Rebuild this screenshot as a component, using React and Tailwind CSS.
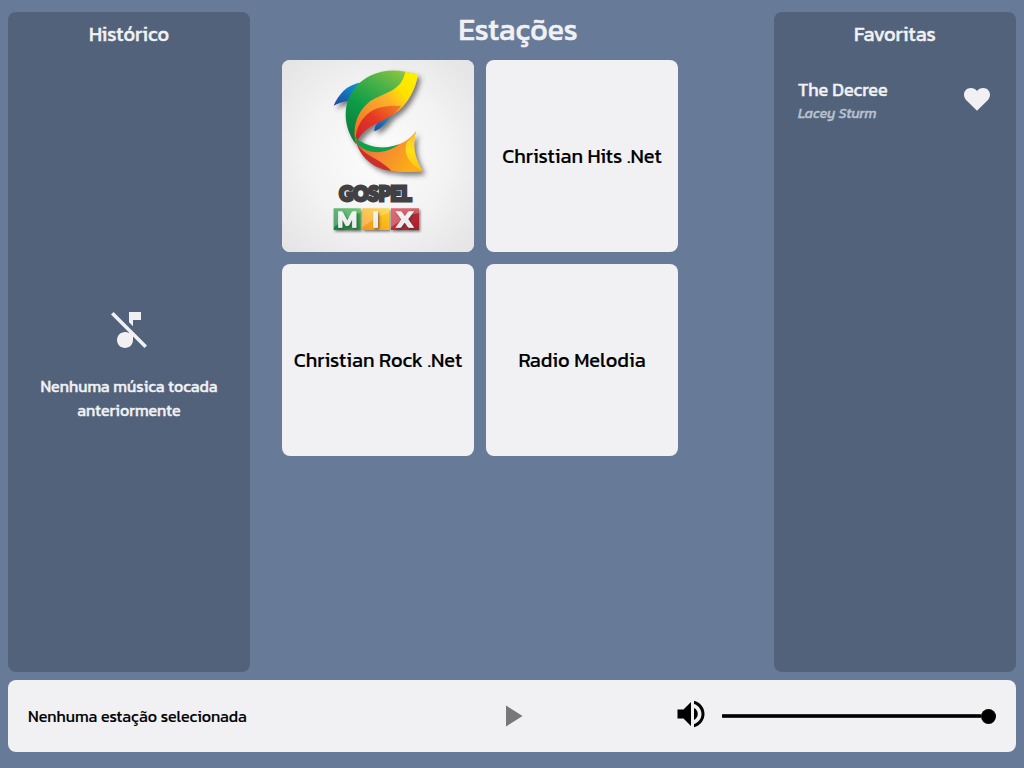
import React from "react";
import { MdMusicOff, MdVolumeUp, MdPlayArrow } from "react-icons/md";

function GospelMixLogo() {
  return (
    <svg viewBox="0 0 576 576" className="block h-full w-full">
      <defs>
        <radialGradient id="bg" cx="50%" cy="50%" r="72%">
          <stop offset="0" stopColor="#fcfcfd" />
          <stop offset="0.5" stopColor="#f3f3f4" />
          <stop offset="0.8" stopColor="#e9e9ea" />
          <stop offset="1" stopColor="#e3e3e4" />
        </radialGradient>
        <linearGradient id="green" x1="0.8" y1="0" x2="0.2" y2="1">
          <stop offset="0" stopColor="#8ec63f" />
          <stop offset="0.3" stopColor="#45b049" />
          <stop offset="0.6" stopColor="#0f9d46" />
          <stop offset="1" stopColor="#087a3c" />
        </linearGradient>
        <linearGradient id="yellow" x1="1" y1="0" x2="0.1" y2="1">
          <stop offset="0" stopColor="#fff200" />
          <stop offset="0.28" stopColor="#ffe100" />
          <stop offset="0.46" stopColor="#fbb02d" />
          <stop offset="1" stopColor="#f26a24" />
        </linearGradient>
        <linearGradient id="red" x1="1" y1="0" x2="0" y2="1">
          <stop offset="0" stopColor="#f58220" />
          <stop offset="0.45" stopColor="#e63a24" />
          <stop offset="1" stopColor="#c91f2d" />
        </linearGradient>
        <linearGradient id="blue" x1="1" y1="0" x2="0" y2="1">
          <stop offset="0" stopColor="#0b9ed9" />
          <stop offset="1" stopColor="#20469b" />
        </linearGradient>
        <linearGradient id="tail" x1="0" y1="0" x2="1" y2="0.4">
          <stop offset="0" stopColor="#ef5a28" />
          <stop offset="0.5" stopColor="#f58634" />
          <stop offset="1" stopColor="#fbac18" />
        </linearGradient>
        <linearGradient id="tailTip" x1="0" y1="0" x2="0" y2="1">
          <stop offset="0" stopColor="#fbc02a" />
          <stop offset="0.5" stopColor="#ffe01a" />
          <stop offset="1" stopColor="#fdc010" />
        </linearGradient>
        <linearGradient id="tileG" x1="0" y1="1" x2="1" y2="0">
          <stop offset="0" stopColor="#12823f" />
          <stop offset="1" stopColor="#43b649" />
        </linearGradient>
        <linearGradient id="tileY" x1="0" y1="1" x2="1" y2="0">
          <stop offset="0" stopColor="#f5921f" />
          <stop offset="1" stopColor="#ffd21e" />
        </linearGradient>
        <linearGradient id="tileR" x1="0" y1="0" x2="1" y2="1">
          <stop offset="0" stopColor="#dc3a45" />
          <stop offset="1" stopColor="#a31e2a" />
        </linearGradient>
        <linearGradient id="silver" x1="0" y1="0" x2="0" y2="1">
          <stop offset="0" stopColor="#ffffff" />
          <stop offset="1" stopColor="#dcdddf" />
        </linearGradient>
        <filter id="shadow" x="-20%" y="-20%" width="150%" height="150%">
          <feDropShadow dx="9" dy="10" stdDeviation="8" floodColor="#444" floodOpacity="0.7" />
        </filter>
        <filter id="small" x="-20%" y="-20%" width="150%" height="150%">
          <feDropShadow dx="4" dy="5" stdDeviation="3" floodColor="#333" floodOpacity="0.6" />
        </filter>
      </defs>
      <rect width="576" height="576" fill="url(#bg)" />
      <g filter="url(#shadow)">
        <path d="M155 137C170 105 192 74 240 67L202 124C186 124 168 130 155 137Z" fill="url(#blue)" />
        <path d="M276 214C278 202 282 192 290 186L330 164C316 184 300 206 276 214Z" fill="url(#blue)" />
        <path d="M222 252C184 205 180 133 216 88C252 42 305 24 370 35L406 43C402 78 379 122 345 153C300 185 244 186 222 252Z" fill="url(#green)" />
        <path d="M370 35L407 43C404 82 374 140 338 160C300 181 232 196 222 252C211 205 222 158 264 124C306 96 358 96 370 35Z" fill="url(#yellow)" />
        <path d="M357 138C322 136 282 138 253 165C230 188 218 216 222 252C235 219 258 203 292 187C320 175 343 160 357 138Z" fill="url(#red)" />
        <path d="M222 236C240 262 270 264 310 263C349 259 382 242 402 214C390 254 397 292 421 333C376 340 317 337 278 312C245 292 223 264 222 236Z" fill="url(#tail)" />
        <path d="M402 214C390 254 397 292 421 333C385 315 361 282 375 246C387 235 396 224 402 214Z" fill="url(#tailTip)" />
        <path d="M222 240C234 285 284 288 328 332C282 330 231 294 222 240Z" fill="#c9302c" />
        <path d="M221 232C254 264 307 270 352 253C311 283 259 286 226 252Z" fill="#0ca14b" />
      </g>
      <text x="172" y="422" textLength="216" lengthAdjust="spacingAndGlyphs" fontFamily="Lato, sans-serif" fontWeight="900" fontSize="61" fill="#414042" stroke="#414042" strokeWidth="9">GOSPEL</text>
      <g filter="url(#small)">
        <rect x="155" y="445" width="81" height="65" fill="url(#tileG)" />
        <rect x="241" y="445" width="81" height="65" fill="url(#tileY)" />
        <rect x="327" y="445" width="84" height="65" fill="url(#tileR)" />
      </g>
      <path d="M155 445H236V458C207 466 181 482 155 502ZM241 445H322V458C293 466 267 482 241 502ZM327 445H411V458C382 466 353 482 327 502Z" fill="#fff" opacity="0.25" />
      <g fontFamily="Lato, sans-serif" fontWeight="900" fontSize="64" fill="url(#silver)" stroke="#f1f1f2" strokeWidth="4" filter="url(#small)">
        <text x="166" y="500" textLength="60" lengthAdjust="spacingAndGlyphs">M</text>
        <text x="271" y="500" textLength="20" lengthAdjust="spacingAndGlyphs">I</text>
        <text x="344" y="500" textLength="48" lengthAdjust="spacingAndGlyphs">X</text>
      </g>
    </svg>
  );
}

function HeartIcon() {
  return (
    <svg width="26" height="23" viewBox="0 0 26 23" fill="currentColor" className="mb-0.5">
      <path d="M13 22.8L3.6 13.6C1.2 11.2 0 9.2 0 6.7C0 2.9 2.9 0 6.8 0C9.3 0 11.7 1.2 13 3C14.3 1.2 16.7 0 19.2 0C23.1 0 26 2.9 26 6.7C26 9.2 24.8 11.2 22.4 13.6Z" />
    </svg>
  );
}

function Station({ children }) {
  return (
    <button className="flex h-48 w-48 items-center justify-center overflow-hidden rounded-lg bg-[#f1f1f4] text-xl whitespace-nowrap text-black [-webkit-text-stroke:0.15px]">
      {children}
    </button>
  );
}

function Panel({ title, children }) {
  return (
    <section className="flex w-[242px] flex-col rounded-lg bg-[#52627a]">
      <h2 className="pt-2 text-center text-xl leading-7">{title}</h2>
      {children}
    </section>
  );
}

export default function App() {
  return (
    <div className="flex h-screen flex-col overflow-hidden bg-[#677a98] px-2 pt-3 pb-4 font-['Kanit','Noto_Sans',sans-serif] font-normal text-[#f1f1f4] [-webkit-text-stroke:0.4px]">
      <div className="flex min-h-0 flex-1 justify-between">
        <Panel title="Histórico">
          <div className="flex flex-1 flex-col items-center justify-center pt-2">
            <MdMusicOff size={48} />
            <p className="mt-5 text-center text-base leading-6">
              Nenhuma música tocada
              <br />
              anteriormente
            </p>
          </div>
        </Panel>
        <main className="flex w-[524px] flex-col">
          <h1 className="pr-[12px] pl-[24px] text-center text-3xl leading-9 [-webkit-text-stroke:0.6px]">Estações</h1>
          <div className="mt-3 ml-8 grid w-[396px] grid-cols-2 gap-3">
            <Station><GospelMixLogo /></Station>
            <Station>Christian Hits .Net</Station>
            <Station>Christian Rock .Net</Station>
            <Station>Radio Melodia</Station>
          </div>
        </main>
        <Panel title="Favoritas">
          <div className="mt-7 flex items-center justify-between pr-[26px] pl-6">
            <div>
              <p className="text-lg leading-7">The Decree</p>
              <p className="text-sm leading-5 text-[#b8c3d2] italic">Lacey Sturm</p>
            </div>
            <HeartIcon />
          </div>
        </Panel>
      </div>
      <footer className="mt-2 flex h-[72px] items-center rounded-lg bg-[#f1f1f4] px-5 text-black [-webkit-text-stroke:0.15px]">
        <p className="w-[466px] text-base">Nenhuma estação selecionada</p>
        <MdPlayArrow size={36} className="text-[#78787a]" />
        <div className="ml-auto flex items-center">
          <MdVolumeUp size={36} className="mb-1" />
          <div className="mr-[0.5px] ml-[13px] flex w-[273.5px] items-center">
            <div className="h-1 flex-1 rounded-[1px] border-y border-[#2b2b2b] bg-black" />
            <div className="h-[15px] w-[15px] rounded-full bg-black" />
          </div>
        </div>
      </footer>
    </div>
  );
}
